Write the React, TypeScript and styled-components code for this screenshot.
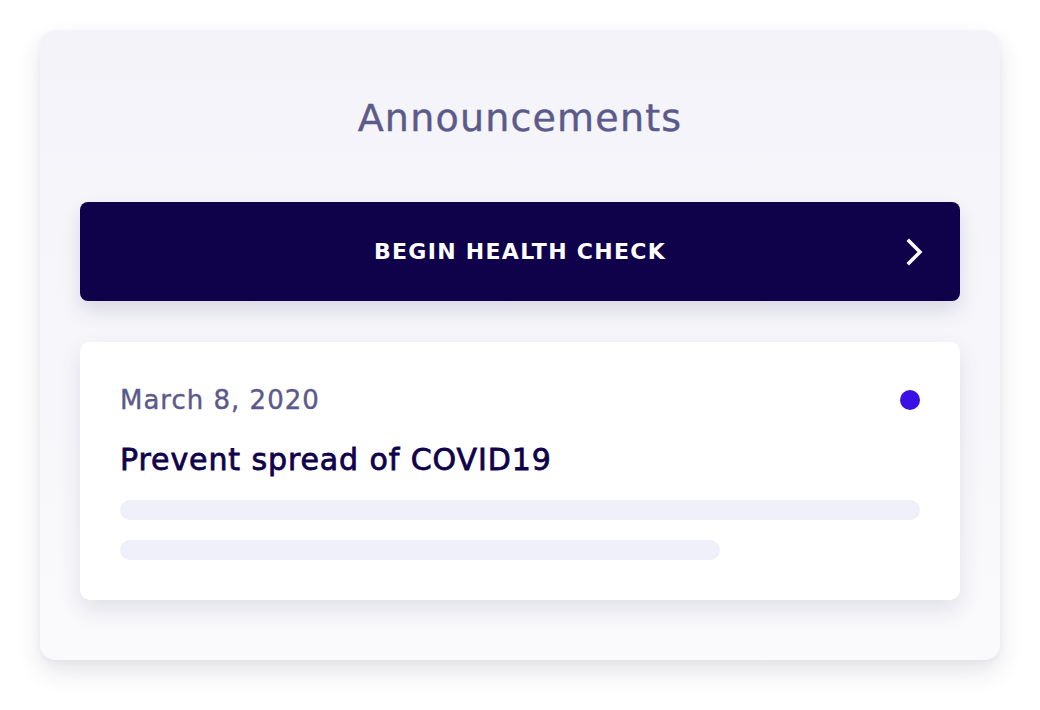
import React from "react";
import styled, { createGlobalStyle } from "styled-components";

const Global = createGlobalStyle`
  html, body { margin: 0; padding: 0; background: #ffffff; }
  body { font-family: "DejaVu Sans", "Noto Sans", sans-serif; }
`;

const Page = styled.div`
  width: 1040px;
  height: 710px;
  padding: 30px 40px 50px;
  box-sizing: border-box;
`;

const Panel = styled.section`
  height: 630px;
  box-sizing: border-box;
  border-radius: 16px;
  background: linear-gradient(180deg, #f3f3f9 0%, #fafafc 100%);
  box-shadow: 0 12px 24px rgba(40, 40, 80, 0.12), 0 2px 6px rgba(40, 40, 80, 0.04);
  padding: 62px 40px 60px;
  display: flex;
  flex-direction: column;
`;

const Title = styled.h1`
  margin: 0;
  height: 52px;
  line-height: 52px;
  text-align: center;
  font-family: "DejaVu Sans", sans-serif;
  font-weight: 400;
  font-size: 38px;
  color: #5b5a8a;
  letter-spacing: 1.2px;
  -webkit-text-stroke: 0.4px #5b5a8a;
`;

const CheckButton = styled.button`
  margin-top: 58px;
  height: 100px;
  box-sizing: border-box;
  padding: 0;
  border: none;
  border-radius: 8px;
  background: #10024a;
  color: #ffffff;
  position: relative;
  display: flex;
  align-items: center;
  justify-content: center;
  box-shadow: 0 10px 20px rgba(16, 2, 74, 0.12);
  font-family: "DejaVu Sans", sans-serif;
  font-weight: 700;
  font-size: 22px;
  letter-spacing: 1.3px;
  cursor: pointer;
`;

const Chevron = styled.svg`
  position: absolute;
  right: 36px;
  top: 50%;
  transform: translateY(-50%);
`;

const Card = styled.article`
  margin-top: 41px;
  background: #ffffff;
  border-radius: 10px;
  box-shadow: 0 10px 22px rgba(40, 40, 90, 0.12);
  padding: 40px;
  display: flex;
  flex-direction: column;
`;

const CardHeader = styled.div`
  display: flex;
  justify-content: space-between;
  align-items: center;
  height: 36px;
`;

const DateText = styled.span`
  font-family: "DejaVu Sans", sans-serif;
  font-size: 26px;
  font-weight: 400;
  color: #5b5a8a;
  letter-spacing: 1px;
  -webkit-text-stroke: 0.4px #5b5a8a;
`;

const Dot = styled.span`
  width: 20px;
  height: 20px;
  border-radius: 50%;
  background: #3a10e5;
`;

const CardTitle = styled.h2`
  margin: 22px 0 0;
  font-family: "DejaVu Sans", sans-serif;
  font-size: 30px;
  line-height: 40px;
  font-weight: 400;
  color: #10024a;
  letter-spacing: 0.9px;
  -webkit-text-stroke: 0.8px #10024a;
`;

const Bar = styled.div<{ $w: string; $mt: number }>`
  margin-top: ${(p) => p.$mt}px;
  width: ${(p) => p.$w};
  height: 20px;
  border-radius: 10px;
  background: #f0f0fa;
`;

export default function App() {
  return (
    <>
      <Global />
      <Page>
        <Panel>
          <Title>Announcements</Title>
          <CheckButton>
            BEGIN HEALTH CHECK
            <Chevron width="18" height="28" viewBox="0 0 18 28">
              <path d="M3 3 L14 14 L3 25" fill="none" stroke="#ffffff" strokeWidth="3.5" strokeLinecap="square" />
            </Chevron>
          </CheckButton>
          <Card>
            <CardHeader>
              <DateText>March 8, 2020</DateText>
              <Dot />
            </CardHeader>
            <CardTitle>Prevent spread of COVID19</CardTitle>
            <Bar $w="100%" $mt={20} />
            <Bar $w="75%" $mt={20} />
          </Card>
        </Panel>
      </Page>
    </>
  );
}
